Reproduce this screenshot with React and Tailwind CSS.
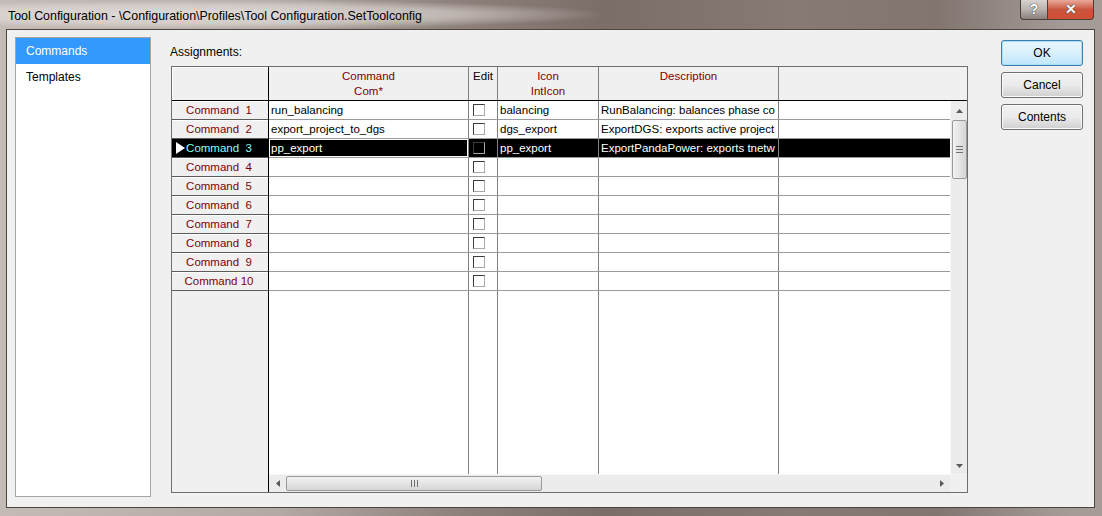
const rows = [
  { cmd: 'run_balancing', icon: 'balancing', desc: 'RunBalancing: balances phase co' },
  { cmd: 'export_project_to_dgs', icon: 'dgs_export', desc: 'ExportDGS: exports active project' },
  { cmd: 'pp_export', icon: 'pp_export', desc: 'ExportPandaPower: exports tnetw', selected: true },
  {}, {}, {}, {}, {}, {}, {},
];

function Checkbox({ dark }) {
  return (
    <div
      className={`w-[12px] h-[12px] border border-t-[#3c3c3c] border-l-[#3c3c3c] border-r-[#a8a8a8] border-b-[#a8a8a8] ${
        dark ? 'bg-black' : 'bg-white'
      }`}
    />
  );
}

function UpArrow() {
  return (
    <svg width="7" height="4" viewBox="0 0 7 4">
      <path d="M3.5 0 L7 4 L0 4 Z" fill="#5a5a5a" />
    </svg>
  );
}

function DownArrow() {
  return (
    <svg width="7" height="4" viewBox="0 0 7 4">
      <path d="M0 0 L7 0 L3.5 4 Z" fill="#5a5a5a" />
    </svg>
  );
}

function RowHeader({ n, selected }) {
  const label = `Command ${String(n).padStart(2, ' ')}`;
  return (
    <div
      className={`relative h-[19px] shrink-0 border-b border-[#5c5c5c] flex items-center justify-center whitespace-pre pt-px ${
        selected ? 'bg-black text-[#7fffff]' : 'bg-[#f0f0f0] text-[#800000] shadow-[inset_0_1px_0_#ffffff]'
      }`}
    >
      {selected && (
        <svg className="absolute left-[4px] top-[3px]" width="9" height="12" viewBox="0 0 9 12">
          <path d="M0 0 L9 6 L0 12 Z" fill="#ffffff" />
        </svg>
      )}
      <span className="pr-[2px]">{label}</span>
    </div>
  );
}

function DataRow({ row }) {
  const sel = row.selected;
  return (
    <div className={`flex h-[19px] shrink-0 border-b border-[#9a9a9a] ${sel ? 'bg-black text-white' : 'bg-white text-black'}`}>
      <div className="w-[200px] shrink-0 border-r border-[#808080] overflow-hidden">
        <div className={`h-full flex items-center pl-[1px] pt-px whitespace-nowrap ${sel ? 'border border-white' : 'border border-transparent'}`}>
          {row.cmd}
        </div>
      </div>
      <div className="w-[29px] shrink-0 border-r border-[#808080] flex items-center pl-[4px]">
        <Checkbox dark={sel} />
      </div>
      <div className="w-[101px] shrink-0 border-r border-[#808080] flex items-center pl-[2px] pt-px whitespace-nowrap overflow-hidden">
        {row.icon}
      </div>
      <div className="w-[180px] shrink-0 border-r border-[#808080] flex items-center pl-[2px] pt-px whitespace-nowrap overflow-hidden">
        {row.desc}
      </div>
      <div className="flex-1" />
    </div>
  );
}

function Grid() {
  return (
    <div className="w-[797px] h-[427px] border border-[#6e6e6e] flex bg-[#f0f0f0] text-[11.5px] font-['Liberation_Sans',sans-serif]">
      {/* row headers */}
      <div className="w-[97px] shrink-0 border-r border-black flex flex-col">
        <div className="h-[34px] shrink-0 border-b border-black bg-[#f0f0f0] shadow-[inset_1px_1px_0_#ffffff]" />
        {rows.map((r, i) => (
          <RowHeader key={i} n={i + 1} selected={r.selected} />
        ))}
        <div className="flex-1" />
      </div>

      {/* body */}
      <div className="flex-1 flex flex-col min-w-0">
        {/* column headers */}
        <div className="h-[34px] shrink-0 border-b border-black flex text-[#800000] leading-[15px]">
          <div className="w-[200px] shrink-0 border-r border-[#808080] flex flex-col items-center pt-[2px]">
            <span>Command</span>
            <span>Com*</span>
          </div>
          <div className="w-[29px] shrink-0 border-r border-[#808080] flex flex-col items-center pt-[2px] text-black">
            <span>Edit</span>
          </div>
          <div className="w-[101px] shrink-0 border-r border-[#808080] flex flex-col items-center pt-[2px]">
            <span>Icon</span>
            <span>IntIcon</span>
          </div>
          <div className="w-[180px] shrink-0 border-r border-[#808080] flex flex-col items-center pt-[2px]">
            <span>Description</span>
          </div>
          <div className="flex-1" />
        </div>

        <div className="flex-1 flex min-h-0">
          {/* data */}
          <div className="flex-1 flex flex-col bg-white">
            {rows.map((r, i) => (
              <DataRow key={i} row={r} />
            ))}
            <div className="flex-1 flex">
              <div className="w-[200px] shrink-0 border-r border-[#808080]" />
              <div className="w-[29px] shrink-0 border-r border-[#808080]" />
              <div className="w-[101px] shrink-0 border-r border-[#808080]" />
              <div className="w-[180px] shrink-0 border-r border-[#808080]" />
              <div className="flex-1" />
            </div>
          </div>
          {/* vertical scrollbar */}
          <div className="w-[17px] shrink-0 bg-[#ececec] border-l border-[#f7f7f7] flex flex-col items-center">
            <div className="h-[19px] shrink-0 flex items-center justify-center">
              <UpArrow />
            </div>
            <div className="w-[15px] h-[59px] shrink-0 rounded-[2px] border border-[#9b9b9b] bg-gradient-to-r from-[#f2f2f2] to-[#d6d6d6] flex flex-col items-center justify-center gap-[2px]">
              <div className="w-[7px] h-px bg-[#6f6f6f]" />
              <div className="w-[7px] h-px bg-[#6f6f6f]" />
              <div className="w-[7px] h-px bg-[#6f6f6f]" />
            </div>
            <div className="flex-1" />
            <div className="h-[17px] shrink-0 flex items-center justify-center">
              <DownArrow />
            </div>
          </div>
        </div>

        {/* horizontal scrollbar */}
        <div className="h-[18px] shrink-0 flex bg-[#ececec] border-t border-[#f7f7f7]">
          <div className="flex-1 flex items-center">
            <div className="w-[17px] shrink-0 flex items-center justify-center">
              <svg width="4" height="7" viewBox="0 0 4 7">
                <path d="M4 0 L4 7 L0 3.5 Z" fill="#5a5a5a" />
              </svg>
            </div>
            <div className="w-[256px] h-[15px] shrink-0 rounded-[2px] border border-[#9b9b9b] bg-gradient-to-b from-[#f2f2f2] to-[#d6d6d6] flex items-center justify-center gap-[2px]">
              <div className="w-px h-[7px] bg-[#6f6f6f]" />
              <div className="w-px h-[7px] bg-[#6f6f6f]" />
              <div className="w-px h-[7px] bg-[#6f6f6f]" />
            </div>
            <div className="flex-1" />
            <div className="w-[17px] shrink-0 flex items-center justify-center">
              <svg width="4" height="7" viewBox="0 0 4 7">
                <path d="M0 0 L4 3.5 L0 7 Z" fill="#5a5a5a" />
              </svg>
            </div>
          </div>
          <div className="w-[17px] shrink-0 bg-[#f0f0f0]" />
        </div>
      </div>
    </div>
  );
}

function Button({ children, primary }) {
  return (
    <button
      className={`w-[82px] h-[26px] rounded-[3px] border text-[12px] text-black ${
        primary
          ? 'border-[#3c7fb1] bg-gradient-to-b from-[#eaf6fd] via-[#d9f0fc] to-[#bee6fd] shadow-[inset_0_0_0_1px_#a9dff7]'
          : 'border-[#707070] bg-gradient-to-b from-[#f2f2f2] via-[#ebebeb] to-[#cfcfcf] shadow-[inset_0_0_0_1px_#fbfbfb]'
      }`}
    >
      {children}
    </button>
  );
}

export default function App() {
  return (
    <div className="w-[1102px] h-[516px] flex flex-col overflow-hidden font-['Liberation_Sans',sans-serif] bg-[linear-gradient(90deg,#c4bbb7_0%,#b3a9a5_25%,#8d807a_42%,#7b6d68_55%,#877a74_72%,#827570_85%,#a59c98_97%)]">
      {/* title bar */}
      <div className="h-[29px] shrink-0 flex items-start relative">
        <div className="absolute left-0 top-0 w-[600px] h-[29px] bg-[radial-gradient(ellipse_at_36%_50%,rgba(234,230,228,0.8)_0%,rgba(234,230,228,0.5)_45%,rgba(234,230,228,0)_72%)]" />
        <div className="relative pl-[8px] pt-[7px] text-[12.4px] text-black whitespace-nowrap">
          Tool Configuration - \Configuration\Profiles\Tool Configuration.SetToolconfig
        </div>
        <div className="relative ml-auto mr-[8px] flex">
          <div className="w-[28px] h-[20px] rounded-bl-[4px] border border-t-0 border-[#4a3f3b] bg-gradient-to-b from-[#d8d3d1] via-[#b9b2af] to-[#8a807c] flex items-center justify-center text-white font-bold text-[14px] [text-shadow:0_0_1px_#333,0_0_1px_#333]">
            ?
          </div>
          <div className="w-[46px] h-[20px] rounded-br-[4px] border border-l-0 border-t-0 border-[#4a3f3b] bg-gradient-to-b from-[#e9a99b] via-[#c8553d] to-[#d24f34] flex items-center justify-center text-white font-bold text-[14px] [text-shadow:0_0_1px_#333,0_0_1px_#333]">
            ✕
          </div>
        </div>
      </div>

      {/* client area */}
      <div className="flex-1 ml-[6px] mr-[7px] mb-[8px] border border-[#4e4440] bg-[#f0f0f0] flex items-start text-[12px]">
        {/* left list */}
        <div className="ml-[8px] mt-[7px] w-[136px] h-[460px] shrink-0 border border-[#a5a5a5] bg-white flex flex-col">
          <div className="h-[26px] bg-[#3399ff] text-white flex items-center pl-[10px]">Commands</div>
          <div className="h-[25px] text-black flex items-center pl-[10px]">Templates</div>
        </div>

        {/* main */}
        <div className="ml-[20px] flex flex-col">
          <div className="h-[36px] pt-[14px] -ml-px leading-[16px] text-black">Assignments:</div>
          <Grid />
        </div>

        {/* buttons */}
        <div className="ml-[33px] mt-[10px] flex flex-col gap-[6px]">
          <Button primary>OK</Button>
          <Button>Cancel</Button>
          <Button>Contents</Button>
        </div>
      </div>
    </div>
  );
}
